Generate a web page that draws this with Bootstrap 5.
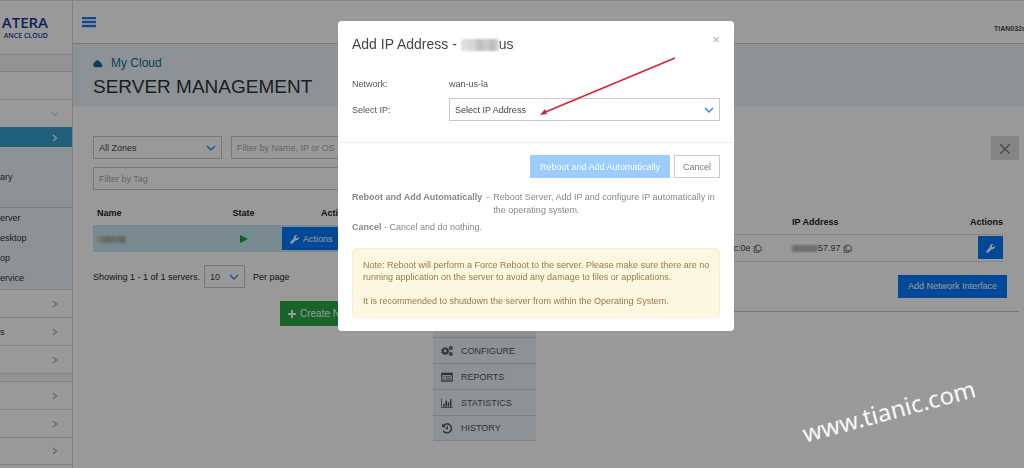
<!DOCTYPE html>
<html lang="en">
<head>
<meta charset="utf-8">
<meta name="viewport" content="width=device-width, initial-scale=1">
<title>Server Management</title>
<link href="https://cdn.jsdelivr.net/npm/bootstrap@5.3.0/dist/css/bootstrap.min.css" rel="stylesheet">
<style>
body{font-family:"Liberation Sans",Arial,sans-serif;font-size:9px;line-height:12px;color:#4a4a4a;background:#fff}
.app{min-height:100vh;border-top:1px solid #ddd}
.side{width:73px;border-right:1px solid #d2d2d2}
.brand-box{height:53px;width:48px;padding-top:12px;color:#1b3a94;overflow:hidden;white-space:nowrap}
.brand-name{font:600 15px/18px "Open Sans",sans-serif}
.brand-sub{font:600 7px/10px "Open Sans",sans-serif}
.strip{height:17px;background:#f5f5f8;border-top:1px solid #ddd}
.strip.thin{height:8px}
.side-item{height:28px;border:0;border-top:1px solid #d9d9d9;background:none;padding:0 13px 0 0;width:100%;color:#aaa}
.side-item:last-child{border-bottom:1px solid #d9d9d9}
.side-item.current{height:20px;background:#3a9fd0;border-color:#3a9fd0;color:#fff}
.side-sub{background:#ebf4fa}
.side-sub a,.side-word{color:#333;text-decoration:none;height:20px;line-height:20px;display:block}
.side-a{height:60px;padding-top:20px}
.side-b{height:82px;border-top:1px solid #cfd8de}
.topbar{height:43px;border-bottom:1px solid #c4ccd2;padding:0 0 0 9px}
.menu-btn{background:none;border:0;padding:0}
.user{font-size:7px;width:30px;overflow:hidden;white-space:nowrap;margin-top:14px}
.page-head{height:63px;background:#ebf4fa;padding:12px 20px 0}
.page-head a{font-size:12px;line-height:14px;color:#0d6a9a}
.page-head h1{font-size:19px;line-height:24px;margin:5px 0 0;color:#333;font-weight:400}
.content{padding:29px 5px 0 20px}
.servers{width:320px}
.field{height:23px;border:1px solid #c8c8c8;border-radius:0;background:#fff;font-size:9px;padding:0 5px;color:#444}
.field::placeholder{color:#aaa;opacity:1}
select.field{appearance:none;background:#fff url("data:image/svg+xml,%3Csvg xmlns='http://www.w3.org/2000/svg' viewBox='0 0 10 6'%3E%3Cpath d='M1 1l4 4 4-4' fill='none' stroke='%232f86e8' stroke-width='1.4'/%3E%3C/svg%3E") no-repeat right 5px center/10px 6px}
.zone{width:129px;margin-right:9px}
.per{width:41px}
.grid{font-size:9px;margin:0;--bs-table-bg:transparent;table-layout:fixed}
.grid th{font-weight:700;color:#222;border:0;padding:0 4px;height:24px;vertical-align:middle}
.grid td{height:27px;padding:0 4px;border:0;vertical-align:middle;color:#444}
.list{margin-top:11px}
.c-name{width:124px}
.c-state{width:53px}
.grid .act-head{padding-right:12px}
.grid .act-cell{padding-left:12px}
.server-row{background:#c8e6f2}
.pager{margin-top:13px}
.act{border:0;border-radius:0;background:#007bff;color:#fff;font-size:9px;line-height:12px;height:23px;padding:0 8px;white-space:nowrap}
.act.wide{padding:0 10px}
.act.green{background:#28a745;height:25px;font-size:10px}
.create{margin-top:13px;padding-right:20px}
.tools{width:103px;margin:193px 0 0 20px;padding-top:8px;background:#ebf4fa}
.tools a{height:26px;border-top:1px solid #cbd5dd;color:#555;text-decoration:none;padding-left:8px;gap:8px}
.tools a:last-child{border-bottom:1px solid #cbd5dd}
.tools svg{width:12px;height:12px}
.detail{min-width:0}
.close-panel{width:28px;height:24px;border:0;background:#dcdce2;color:#777;padding:0}
.nic-box{margin-top:50px;border-bottom:1px solid #c4c4c4;padding:0 12px 13px 0}
.nics-wrap{padding-right:4px;margin-bottom:13px}
.c-mac{width:252px}
.c-act{width:60px}
.nics td{border-top:1px solid #dcdcdc;border-bottom:1px solid #dcdcdc}
.nics .mac{padding-right:26px}
.nics th:last-child,.nics td:last-child{padding-right:0}
.smudge{display:inline-block;width:28px;height:7px;background:linear-gradient(90deg,#ccc,#aaa 40%,#bbb 70%,#999);filter:blur(1px);vertical-align:middle}
.smudge.big{width:38px;height:12px;background:linear-gradient(90deg,#e2e2e2,#d4d4d4 35%,#bbb 50%,#ccc 65%,#bbb 85%,#ddd)}
.smudge.pale{background:#b9b9b9;width:26px}
.shade{position:fixed;inset:0;background:#000;opacity:.4}
.modal.show-now{display:block}
.modal-dialog{width:396px;max-width:100%;margin:21px auto 0;left:24px}
.modal-content{border:0;border-radius:4px;color:#555}
.modal-top{padding:13px 14px 21px;border-bottom:1px solid #ececec}
.modal-top h2{font-size:14px;line-height:20px;margin:0;font-weight:400;color:#444}
.x-btn{background:none;border:0;color:#aaa;font-size:13px;line-height:12px;padding:0}
.lbl{width:97px}
.modal-low{padding:12px 14px 13px}
.confirm{margin-bottom:13px}
.wait{background:#9dccff;color:#fff}
.ghost{background:#fff;border:1px solid #ccc;color:#777}
.notes{color:#888;line-height:13px}
.warn{background:#fdf6e0;border:1px solid #faf0cf;border-radius:3px;color:#9a7c43;padding:10px 4px 10px 10px;margin:14px 0 0}
.warn p{margin:0 0 12px}
.warn p:last-child{margin:0}
.arrow{position:absolute;left:199px;top:34px;width:142px;height:64px}
.stamp{position:fixed;right:46px;bottom:42px;font:24px/30px "Noto Sans",sans-serif;color:#fff;transform:rotate(-15deg);z-index:1100}
</style>
</head>
<body>
<svg width="0" height="0" class="position-absolute"><defs>
<symbol id="right" viewBox="0 0 8 8"><path d="M2 1l3.5 3L2 7" fill="none" stroke="currentColor" stroke-width="1.2"/></symbol>
<symbol id="down" viewBox="0 0 8 8"><path d="M1 2.5l3 3 3-3" fill="none" stroke="currentColor"/></symbol>
<symbol id="wrench" viewBox="0 0 16 16"><path fill="currentColor" d="M15.7 3.6a.4.4 0 0 0-.6-.2l-2.5 2.5-2.1-.4-.4-2.1L12.600.9a.4.4 0 0 0-.2-.6 4.500 4.500 0 0 0-5.600 5.600L.9 11.800a2.300 2.300 0 1 0 3.300 3.300l5.900-5.900a4.500 4.500 0 0 0 5.600-5.600zM2.500 14.300a.8.8 0 1 1 0-1.600.8.8 0 0 1 0 1.600z"/></symbol>
<symbol id="copy" viewBox="0 0 12 12"><path d="M4 1.500h4l3 2.500v5H4zM4 3.500H1.500v7.500H8V9" fill="none" stroke="currentColor"/></symbol>
</defs></svg>
<div class="app d-flex">
  <nav class="side flex-shrink-0">
    <div class="brand-box d-flex flex-column align-items-end">
      <span class="brand-name">ATERA</span><span class="brand-sub">ANCE CLOUD</span>
    </div>
    <div class="strip"></div>
    <div class="side-item"></div>
    <button class="side-item d-flex align-items-center justify-content-end" aria-label="Expand"><svg width="8" height="8"><use href="#down"/></svg></button>
    <button class="side-item current d-flex align-items-center justify-content-end" aria-label="Cloud"><svg width="8" height="8"><use href="#right"/></svg></button>
    <div class="side-sub">
      <div class="side-a"><a href="#">ary</a></div>
      <div class="side-b"><a href="#">erver</a><a href="#">esktop</a><a href="#">op</a><a href="#">ervice</a></div>
    </div>
    <button class="side-item d-flex align-items-center justify-content-end" aria-label="Open"><svg width="8" height="8"><use href="#right"/></svg></button>
    <button class="side-item d-flex align-items-center justify-content-between"><span class="side-word">s</span><svg width="8" height="8"><use href="#right"/></svg></button>
    <button class="side-item d-flex align-items-center justify-content-end" aria-label="Open"><svg width="8" height="8"><use href="#right"/></svg></button>
    <div class="strip thin"></div>
    <button class="side-item d-flex align-items-center justify-content-end" aria-label="Open"><svg width="8" height="8"><use href="#right"/></svg></button>
    <button class="side-item d-flex align-items-center justify-content-end" aria-label="Open"><svg width="8" height="8"><use href="#right"/></svg></button>
    <button class="side-item d-flex align-items-center justify-content-end" aria-label="Open"><svg width="8" height="8"><use href="#right"/></svg></button>
  </nav>
  <div class="flex-grow-1 overflow-hidden">
    <header class="topbar d-flex align-items-center justify-content-between">
      <button class="menu-btn d-flex" aria-label="Menu"><svg width="14" height="11" fill="#1f78e6"><path d="M0 0h14v2H0zM0 4h14v2H0zM0 8h14v2H0z" stroke="#1f78e6" stroke-width=".4"/></svg></button>
      <b class="user">TIAN032c</b>
    </header>
    <div class="page-head">
      <a href="#" class="d-flex align-items-center text-decoration-none"><svg width="10" height="9" viewBox="0 0 16 12" class="me-2" fill="currentColor"><path d="M4 12a4 4 0 0 1-1.500-7.500A4.500 4.500 0 0 1 11 3.500 3 3 0 0 1 13.500 7 2.600 2.600 0 0 1 13 12z"/></svg>My Cloud</a>
      <h1>SERVER MANAGEMENT</h1>
    </div>
    <main class="content d-flex align-items-start">
      <section class="servers flex-shrink-0">
        <div class="d-flex mb-2">
          <select class="field zone" aria-label="Zone"><option>All Zones</option></select>
          <input class="field flex-grow-1" placeholder="Filter by Name, IP or OS" aria-label="Filter by name">
        </div>
        <input class="field w-100 d-block" placeholder="Filter by Tag" aria-label="Filter by tag">
        <table class="grid list table">
          <thead><tr><th class="c-name">Name</th><th class="c-state text-center">State</th><th class="act-head text-center">Actions</th></tr></thead>
          <tbody><tr class="server-row"><td><span class="smudge"></span></td>
          <td class="text-center"><svg width="8" height="8"><path d="M0 0l8 4-8 4z" fill="#18a32c"/></svg></td>
          <td class="act-cell"><button class="act"><svg width="9" height="9" class="me-1"><use href="#wrench"/></svg>Actions</button></td></tr></tbody>
        </table>
        <div class="pager d-flex align-items-center text-dark">
          <label for="per">Showing 1 - 1 of 1 servers.</label>
          <select id="per" class="field per ms-1 me-2"><option>10</option></select>Per page
        </div>
        <div class="create d-flex justify-content-end"><button class="act green"><svg width="8" height="8" class="me-1" fill="currentColor"><path d="M3 0h2v3h3v2H5v3H3V5H0V3h3z"/></svg>Create New Server</button></div>
      </section>
      <nav class="tools flex-shrink-0">
        <a href="#" class="d-flex align-items-center"><svg viewBox="0 0 16 16" fill="none" stroke="currentColor"><circle cx="5.500" cy="8" r="3.200" stroke-width="2.600"/><circle cx="5.500" cy="8" r="5" stroke-width="1.200" stroke-dasharray="2 2"/><circle cx="13" cy="4" r="1.700" stroke-width="1.800"/><circle cx="13" cy="12" r="1.700" stroke-width="1.800"/></svg>CONFIGURE</a>
        <a href="#" class="d-flex align-items-center"><svg viewBox="0 0 16 16" fill="none" stroke="currentColor"><path d="M1 3h14v10.500H1z" stroke-width="1.500"/><path d="M1 4h14" stroke-width="3"/><path d="M3 7.500h2m1 0h7M3 9.500h2m1 0h7M3 11.500h2m1 0h7"/></svg>REPORTS</a>
        <a href="#" class="d-flex align-items-center"><svg viewBox="0 0 16 16" fill="none" stroke="currentColor"><path d="M.7 2v12H16"/><path d="M4 13V9m3 4V5m3 8V7m3 6V3" stroke-width="2"/></svg>STATISTICS</a>
        <a href="#" class="d-flex align-items-center"><svg viewBox="0 0 16 16" fill="none" stroke="currentColor"><path d="M3 5a6 6 0 1 1 0 7" stroke-width="2"/><path d="M1.500 2v5h5z" fill="currentColor" stroke="none"/><path d="M8.500 5v4H6" stroke-width="1.500"/></svg>HISTORY</a>
      </nav>
      <section class="detail flex-grow-1">
        <div class="d-flex justify-content-end"><button class="close-panel" aria-label="Close panel"><svg width="10" height="10" stroke="currentColor" stroke-width="1.300"><path d="M0 0l10 10M10 0L0 10"/></svg></button></div>
        <div class="nic-box">
          <div class="nics-wrap"><table class="grid nics table">
            <thead><tr><th class="c-mac"></th><th>IP Address</th><th class="c-act text-end">Actions</th></tr></thead>
            <tbody><tr><td class="mac text-end">c:0e <svg width="9" height="9"><use href="#copy"/></svg></td>
            <td><span class="smudge pale"></span>57.97 <svg width="9" height="9"><use href="#copy"/></svg></td>
            <td class="text-end"><button class="act" aria-label="Actions"><svg width="9" height="9"><use href="#wrench"/></svg></button></td></tr></tbody>
          </table></div>
          <div class="d-flex justify-content-end"><button class="act wide">Add Network Interface</button></div>
        </div>
      </section>
    </main>
  </div>
</div>
<div class="shade"></div>
<div class="modal show-now" role="dialog" aria-labelledby="dlg">
  <div class="modal-dialog"><div class="modal-content">
    <div class="modal-top">
      <div class="d-flex justify-content-between align-items-start mb-4">
        <h2 id="dlg">Add IP Address - <span class="smudge big"></span>us</h2>
        <button class="x-btn" aria-label="Close">×</button>
      </div>
      <div class="d-flex mb-2"><span class="lbl">Network:</span><span>wan-us-la</span></div>
      <div class="d-flex align-items-center"><label class="lbl" for="ip">Select IP:</label><select id="ip" class="field flex-grow-1"><option>Select IP Address</option></select></div>
    </div>
    <div class="modal-low">
      <div class="confirm d-flex justify-content-end gap-1"><button class="act wide wait">Reboot and Add Automatically</button><button class="act ghost">Cancel</button></div>
      <div class="notes">
        <div class="d-flex"><b class="text-nowrap">Reboot and Add Automatically</b><span class="mx-1">-</span><span>Reboot Server, Add IP and configure IP automatically in the operating system.</span></div>
        <div class="mt-1"><b>Cancel</b> - Cancel and do nothing.</div>
      </div>
      <div class="warn"><p>Note: Reboot will perform a Force Reboot to the server. Please make sure there are no running application on the server to avoid any damage to files or applications.</p><p>It is recommended to shutdown the server from within the Operating System.</p></div>
    </div>
    <svg class="arrow" viewBox="0 0 142 64"><path d="M138 3L6 58" stroke="#d8232a" stroke-width="1.500"/><path d="M3 60l5-6 2 5z" fill="#d8232a"/></svg>
  </div></div>
</div>
<div class="stamp">www.tianic.com</div>
<script src="https://cdn.jsdelivr.net/npm/bootstrap@5.3.0/dist/js/bootstrap.bundle.min.js"></script>
</body>
</html>
